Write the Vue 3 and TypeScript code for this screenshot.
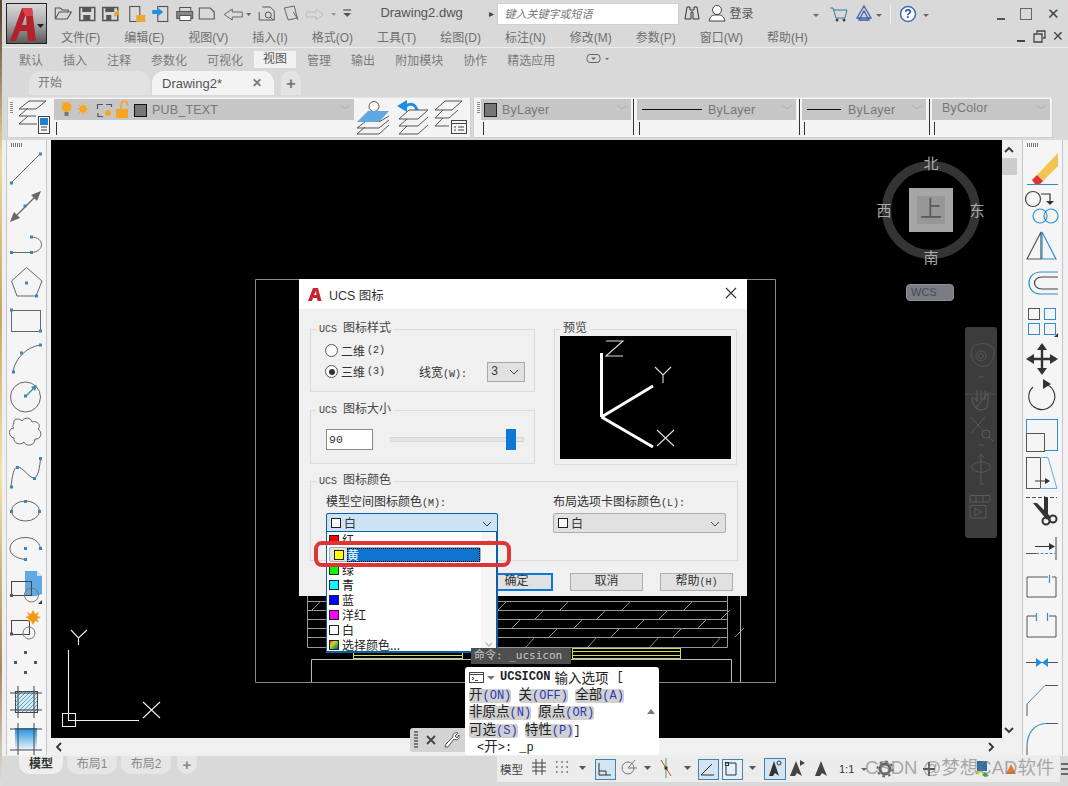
<script setup lang="ts">
const B = '#3d86b8'
const G = '#666'
const D = '#333'
const sq = (x: number, y: number, c = B, s = 3) => `<rect x="${x - s / 2}" y="${y - s / 2}" width="${s}" height="${s}" fill="${c}"/>`
const ln = (d: string, c = G, w = 1, extra = '') => `<path d="${d}" fill="none" stroke="${c}" stroke-width="${w}" ${extra}/>`
const fl = (d: string, c = D) => `<path d="${d}" fill="${c}"/>`
const rc = (x: number, y: number, w: number, h: number, c = G, f = 'none', sw = 1) => `<rect x="${x + 0.5}" y="${y + 0.5}" width="${w}" height="${h}" fill="${f}" stroke="${c}" stroke-width="${sw}"/>`
const ci = (x: number, y: number, r: number, c = G, f = 'none', sw = 1) => `<circle cx="${x}" cy="${y}" r="${r}" fill="${f}" stroke="${c}" stroke-width="${sw}"/>`
const hatch = (x0: number, y0: number, x1: number, y1: number, c: string) => {
  let d = ''
  for (let i = 4; i < x1 - x0 + y1 - y0; i += 4) {
    const ax = Math.min(x0 + i, x1), ay = y0 + Math.max(0, x0 + i - x1)
    const bx = x0 + Math.max(0, y0 + i - y1), by = Math.min(y0 + i, y1)
    d += `M${ax} ${ay}L${bx} ${by}`
  }
  return ln(d, c, 0.8)
}

const leftTools: { top: number; h: number; art: string }[] = [
  { top: 150, h: 36, art: ln('M11 183L40 154') + sq(11.5, 183) + sq(40.5, 154) },
  { top: 186, h: 40, art: ln('M14 218L38 194', G, 1.2) + fl('M10 222L20 218L14 212Z', '#666') + fl('M41 191L31 195L37 201Z', '#666') + sq(25, 206) },
  { top: 226, h: 38, art: ln('M11 252.5H31M31 237C45 237 45 252 31 252.5') + sq(11.5, 252.5) + sq(31.5, 252.5) + sq(31.5, 237) },
  { top: 264, h: 39, art: ln('M26.5 267.5L42 281L36 296H17L11.5 281Z') + sq(26.5, 283) + sq(36.5, 296) },
  { top: 303, h: 38, art: rc(11, 310, 29, 21) + sq(11.5, 310) + sq(40.5, 331) },
  { top: 341, h: 38, art: ln('M13 372C15 358 27 347 40 345') + sq(13.5, 372) + sq(21.5, 353) + sq(40.5, 345) },
  { top: 379, h: 36, art: ci(25.5, 397, 15) + ln('M26 396L35 387', B, 1.2) + fl('M37 385L31 387L35 391Z', B) + sq(25.5, 396) },
  { top: 415, h: 37, art: ln('M14 424C12 418 20 418 22 421C24 417 31 417 32 422C37 420 42 426 38 429C43 432 41 440 35 439C35 446 26 447 24 442C20 446 13 443 14 438C8 437 8 428 14 428C12 427 13 425 14 424Z') },
  { top: 452, h: 40, art: ln('M11 487C12 476 14 467 17.5 467C23 467 29 478 34 478C38 478 40 466 40.5 458') + sq(11.5, 487) + sq(17.5, 467.5) + sq(34.5, 478.5) + sq(40.5, 458.5) },
  { top: 492, h: 38, art: `<ellipse cx="25.5" cy="511" rx="14" ry="10" fill="none" stroke="${G}"/>` + sq(25.5, 501.5) + sq(11.5, 511.5) + sq(39.5, 511.5) },
  { top: 530, h: 38, art: ln('M25 559.5C15 558 10 554 10 548.5C10 542 17 537.5 25 537.5C33 537.5 39 541 40.5 548') + sq(25.5, 548.5) + sq(40.5, 548.5) + sq(25.5, 559.5) },
  { top: 568, h: 38, art: fl('M25 571H37L42 576V594L36 596H25Z', '#62a9e4') + fl('M37 571L42 576H37Z', '#cfe3f3') + rc(11, 581, 20, 14, '#444') + ci(31.5, 595, 7, '#777') + sq(11.5, 595.5, '#555') + fl('M38 604H42V600Z', '#333') },
  { top: 606, h: 37, art: rc(11, 620, 18, 14, '#444') + ci(29, 633, 6, '#777') + sq(11.5, 634, '#555') + fl('M33 610L35 614L39 612L37 616L41 617L37 619L39 622L35 621L33 625L31 621L27 622L29 619L25 617L29 616L27 612L31 614Z', '#f49a10') },
  { top: 643, h: 38, art: sq(25.5, 652.5, '#555') + sq(15.5, 662.5, '#555') + sq(35.5, 662.5, '#555') + sq(25.5, 672.5, '#555') },
  { top: 681, h: 41, art: rc(15, 691, 22, 21, '#444', '#dceaf4') + hatch(15, 691, 37, 712, '#2f8fd0') + ln('M18 686V718M34 686V718M10 693H42M10 710H42', '#444') },
  { top: 722, h: 33, art: `<defs><linearGradient id="gr1" x1="0" y1="0" x2="0" y2="1"><stop offset="0" stop-color="#1e90e0"/><stop offset="1" stop-color="#fff"/></linearGradient></defs><rect x="15" y="728" width="22" height="24" fill="url(#gr1)"/>` + ln('M18 723V755M34 723V755M10 729H42M10 750H42', '#444') }
]

const rightTools: { top: number; h: number; art: string }[] = [
  { top: 150, h: 37, art: fl('M1058 153V166L1043 181L1037 175Z', '#f2c452') + fl('M1037 175L1043 181L1040 184H1035L1032 180Z', '#e53030') + ln('M1027 184.5H1058', B) },
  { top: 187, h: 38, art: ci(1033, 199, 7.5, '#444', 'none', 1.2) + ln('M1041 194H1050V202', '#333', 1.2) + fl('M1046 201H1054L1050 205Z') + ci(1040, 216, 7, '#2f8fd0', 'none', 1.2) + ci(1051, 216, 7, '#2f8fd0', 'none', 1.2) },
  { top: 225, h: 37, art: ln('M1027 259L1041 232V259Z', '#555', 1.2) + ln('M1042 232L1056 259H1042Z', '#2f8fd0', 1.2) },
  { top: 262, h: 38, art: ln('M1058 272H1041C1025 272 1025 294 1041 294H1058', '#2f8fd0', 1.2) + ln('M1058 277H1042C1032 277 1032 289 1042 289H1058', '#444', 1.2) },
  { top: 300, h: 38, art: rc(1028, 308, 11, 11, '#555') + rc(1044, 308, 11, 11, '#2f8fd0') + rc(1028, 323, 11, 11, '#2f8fd0') + rc(1044, 323, 11, 11, '#2f8fd0') + fl('M1054 337H1058V333Z') },
  { top: 338, h: 40, art: ln('M1042 345V373M1028 359H1056', D, 2.4) + fl('M1042 343L1037 350H1047Z') + fl('M1042 375L1037 368H1047Z') + fl('M1026 359L1034 354V364Z') + fl('M1058 359L1050 354V364Z') },
  { top: 378, h: 37, art: ln('M1045 384A13 13 0 1 1 1033 387', D, 1.1) + fl('M1051 384L1043 379V389Z') },
  { top: 415, h: 40, art: rc(1026, 419, 31, 31, '#2f8fd0') + fl('M1026 433H1045V452H1026Z', '#f5f5f5') + rc(1026, 433, 18, 18, '#555') },
  { top: 455, h: 38, art: rc(1026, 457, 14, 31, '#555') + ln('M1040 457.5H1048L1057 488.5H1040', '#5faee4') + ln('M1035 481H1048', D) + fl('M1050 481L1045 478V484Z') },
  { top: 493, h: 36, art: ln('M1026 497.5H1057', '#555', 1, 'stroke-dasharray="4 2"') + fl('M1044 496L1048 498L1048 514L1044 516Z') + fl('M1033 503L1037 503L1050 516L1047 520Z') + ci(1046, 521, 3.5, D, 'none', 2) + ci(1053, 519, 3.5, D, 'none', 2) },
  { top: 529, h: 40, art: ln('M1056 537V560', '#444') + ln('M1035 546.5H1050', D) + fl('M1055 546.5L1049 543V550Z') + ln('M1026 553.5H1036', '#555') + ln('M1036 553.5H1055', '#2f8fd0', 1, 'stroke-dasharray="3 1.5"') },
  { top: 569, h: 38, art: ln('M1048 577H1027V597H1056V577H1052', '#555', 1) + ln('M1049.5 575V583', '#2f8fd0', 1.2) },
  { top: 607, h: 38, art: ln('M1036 616H1027V637H1056V616H1049', '#555', 1) + ln('M1036.5 613V621M1047.5 613V621', '#2f8fd0', 1.2) },
  { top: 645, h: 38, art: ln('M1026 662.5H1058', '#555') + fl('M1036 658V667L1042 662.5Z', '#1f8fe6') + fl('M1048 658V667L1042 662.5Z', '#1f8fe6') },
  { top: 683, h: 38, art: ln('M1045 685.5H1058M1027 704V716', '#555') + ln('M1045 685.5L1027 704', '#3f8fc8') },
  { top: 721, h: 34, art: ln('M1046 723.5H1058M1027 746V755', '#555') + ln('M1046 723.5C1035 723.5 1027 733 1027 746', '#3f8fc8', 1.2) }
]

const qa: { x: number; w: number; art: string }[] = [
  { x: 52, w: 24, art: ln('M55 19V8H60L62 10H68V12M55 19H67L71 12H59L55 19', '#555', 1.1) },
  { x: 76, w: 23, art: rc(78, 7, 15, 13, '#555', 'none', 1.5) + fl('M81 7H90V12H81Z', '#555') + fl('M82 15H89V20H82Z', '#555') },
  { x: 99, w: 25, art: rc(101, 7, 15, 13, '#555', 'none', 1.5) + fl('M104 7H113V12H104Z', '#555') + fl('M105 15H110V20H105Z', '#555') + fl('M113 13L118 9L117 15L113 17Z', '#e8a52c') },
  { x: 124, w: 24, art: rc(127, 6, 10, 15, '#555', 'none', 1.1) + fl('M134 15H143V22H134Z', '#eaa92e') },
  { x: 148, w: 23, art: rc(155, 6, 10, 15, '#555', 'none', 1.1) + fl('M150 10H156V8L161 12L156 16V14H150Z', '#1f8fe6') },
  { x: 171, w: 23, art: rc(176, 7, 11, 5, '#555') + rc(173, 11, 16, 7, '#555', '#888') + rc(176, 15, 11, 5, '#555', '#fff') },
  { x: 194, w: 23, art: ln('M196 8H207L211 12V19H196Z', '#555', 1.1) },
  { x: 217, w: 24, art: ln('M228 9V12H238V17H228V20L220 14.5Z', '#666', 1) },
  { x: 241, w: 12, art: fl('M242 13H247L244.5 16Z', '#666') },
  { x: 253, w: 23, art: ln('M258 7H266L270 11V20H255V12', '#555') + ci(264, 15, 3, '#555') + ln('M266 17L269 20', '#555') },
  { x: 276, w: 23, art: ln('M279 8L289 6L292 18L283 20Z', '#666') + ln('M288 12L293 20', '#666') },
  { x: 299, w: 22, art: ln('M311 9V12H301V17H311V20L318 14.5Z', '#bbb', 1) },
  { x: 321, w: 12, art: fl('M325 13H330L327.5 16Z', '#999') },
  { x: 333, w: 16, art: ln('M337 10H345', '#555', 1.2) + fl('M337 13H345L341 17Z', '#555') }
]

const st: { x: number; w: number; m: number; art: string }[] = [
  { x: 524, w: 22, m: 5, art: ln('M527 763H541M527 767H541M527 771H541M531 759V775M537 759V775', '#444') },
  { x: 546, w: 20, m: 1, art: ln('M550 762H562M550 767H562M550 772H562', '#666', 1.6, 'stroke-dasharray="1.6 3.6"') },
  { x: 566, w: 14, m: 3, art: fl('M570 766H577L573.5 770Z', '#555') },
  { x: 580, w: 27, m: 2, art: rc(584, 759, 20, 20, '#3f84b5', '#d3e5f3') + ln('M588 763V775H600M588 771H595V775', '#333') },
  { x: 607, w: 20, m: 1, art: ci(616, 768, 6, '#777') + ln('M616 768H625M616 768L623 760', '#777') },
  { x: 627, w: 13, m: 2, art: fl('M630 766H637L633.5 770Z', '#555') },
  { x: 640, w: 20, m: 2, art: ln('M645 760L655 776', '#d83a3a') + ln('M650 758V778', '#4a4') + sq(650, 768, '#333') },
  { x: 660, w: 14, m: 4, art: fl('M664 766H671L667.5 770Z', '#555') },
  { x: 674, w: 25, m: 0, art: rc(678, 759, 20, 20, '#3f84b5', '#d3e5f3') + ln('M681 775H694M681 775L692 764', '#333') },
  { x: 699, w: 23, m: 2, art: rc(700, 759, 20, 20, '#3f84b5', '#e6f0f8') + ln('M704 763H714V775H704V766', '#333') + rc(703, 762, 3, 3, '#333') },
  { x: 722, w: 12, m: 3, art: fl('M724 766H731L727.5 770Z', '#555') },
  { x: 734, w: 26, m: 2, art: rc(737, 758, 21, 21, '#3f84b5', '#d3e5f3') + fl('M747 761L752 776L748 773L746 776L742 776Z', '#333') + ci(752, 763, 2, '#333') },
  { x: 760, w: 24, m: -3, art: fl('M772 761L778 776L773 773L771 776L766 776Z', '#444') + fl('M776 760L781 763L776 766Z', '#444') },
  { x: 784, w: 20, m: 3, art: fl('M794 761L800 776L795 773L793 776L788 776Z', '#444') }
]

const menus = ['文件(F)', '编辑(E)', '视图(V)', '插入(I)', '格式(O)', '工具(T)', '绘图(D)', '标注(N)', '修改(M)', '参数(P)', '窗口(W)', '帮助(H)']
const ribbon = ['默认', '插入', '注释', '参数化', '可视化', '视图', '管理', '输出', '附加模块', '协作', '精选应用']
const colors = [
  { n: '红', c: '#ff0000' }, { n: '黄', c: '#ffff00', sel: true }, { n: '绿', c: '#00ff00' }, { n: '青', c: '#00ffff' },
  { n: '蓝', c: '#0000ff' }, { n: '洋红', c: '#ff00ff' }, { n: '白', c: '#ffffff' }
]
let hatchLines = ''
const rows = [601, 610, 619, 628, 637, 647]
for (let r = 0; r < 5; r++) {
  for (let i = 0; i < 7; i++) {
    const x = 312 + i * 62 + ((r * 37) % 60)
    hatchLines += `M${x} ${rows[r + 1]}L${x + 9} ${rows[r]}`
  }
}
</script>

<template>
  <div class="root">
    <div class="desk"></div>
    <div class="app">
      <header class="head">
        <div class="logo">
          <svg width="38" height="38" viewBox="0 0 38 38">
            <path d="M2 36L14 3H24L28 36H20L19 26H12L8 36ZM14 20H18.5L18 9Z" fill="#b3212c" />
            <path d="M14 3H24L25 11H17Z" fill="#d8434a" />
            <path d="M29 19H36L32.5 23Z" fill="#222" />
          </svg>
        </div>
        <div class="head-main">
          <div class="qa-row">
            <svg v-for="t in qa" :key="t.x" :width="t.w * 1.022" height="22" :viewBox="`${t.x} 3 ${t.w} 22`" v-html="t.art"></svg>
            <span class="title">Drawing2.dwg</span>
            <span class="tri">▸</span>
            <div class="search">键入关键字或短语</div>
            <svg width="16" height="22" viewBox="683 3 16 22"><path d="M686 7H689V10H693V7H696L698 19H692V12H690V19H684Z" fill="none" stroke="#333" /></svg>
            <svg class="user" width="18" height="22" viewBox="705 3 18 22"><circle cx="714" cy="10" r="4.5" fill="#fff" stroke="#444" /><path d="M706 21C707 16 710 15 712 15H716C718 15 721 16 722 21Z" fill="#fff" stroke="#444" /></svg>
            <span class="login">登录</span>
            <span class="dd dd-login"></span>
            <svg class="cart" width="18" height="22" viewBox="825 3 18 22"><path d="M825 8H828L831 18H840L842 10H829" fill="none" stroke="#2d7f9c" /><circle cx="832" cy="20" r="1.5" fill="#444" /><circle cx="839" cy="20" r="1.5" fill="#444" /></svg>
            <svg class="a360" width="18" height="22" viewBox="848 3 18 22"><path d="M857 6L864 18H850ZM857 11L852 20H862Z" fill="none" stroke="#3a5fa8" stroke-width="1.3" /></svg>
            <span class="dd dd-a"></span>
            <i class="vsep"></i>
            <svg width="17" height="22" viewBox="893 3 17 22"><circle cx="901" cy="14" r="7.5" fill="#fff" stroke="#3b6fb5" stroke-width="1.5" /><text x="901" y="18" font-size="12" font-weight="700" text-anchor="middle" fill="#1f4fa0" font-family="Liberation Sans, sans-serif">?</text></svg>
            <span class="dd dd-h"></span>
            <div class="win">
              <span class="w-min"></span>
              <span class="w-max"></span>
              <span class="w-x">✕</span>
            </div>
          </div>
          <nav class="menu-row">
            <span v-for="m in menus" :key="m">{{ m }}</span>
            <div class="doc-ctl">
              <i class="c-min"></i>
              <svg width="13" height="13" viewBox="0 0 13 13"><path d="M4 3V1H12V8H10M1 4H9V12H1Z" fill="none" stroke="#444" stroke-width="1.3" /></svg>
              <b>✕</b>
            </div>
          </nav>
        </div>
      </header>

      <div class="ribbon">
        <span v-for="r in ribbon" :key="r" :class="{ on: r === '视图' }">{{ r }}</span>
        <svg class="r-ico" width="24" height="12" viewBox="0 0 24 12"><rect x="1" y="1.5" width="13" height="8" rx="3" fill="none" stroke="#666" /><path d="M5 4.5H10L7.5 7Z M19 5H23L21 7Z" fill="#666" /></svg>
      </div>

      <div class="docs">
        <div class="doc doc-a">开始</div>
        <div class="doc doc-b"><span>Drawing2*</span><b>✕</b></div>
        <div class="doc doc-p">+</div>
      </div>

      <div class="bars">
        <div class="panel p1">
          <i class="grip"></i>
          <svg class="state" width="34" height="36" viewBox="15 99 34 36">
            <path d="M18 109L28 101H45L35 109ZM18 116L27 108M18 116H35M18 124L27 116M18 124H36" fill="none" stroke="#555" />
            <rect x="37.500" y="116.500" width="11" height="17" fill="#f4f4f4" stroke="#444" /><rect x="39" y="118" width="8" height="7" fill="#1f7fd0" />
            <path d="M40 127H46M40 130H46" stroke="#444" />
          </svg>
          <div class="seg seg-l">
            <div class="combo cb-layer">
              <svg width="93" height="21" viewBox="55 98 93 21">
                <circle cx="66.500" cy="106" r="5" fill="#f5a623" /><rect x="64.500" y="111" width="4" height="4" fill="#777" />
                <circle cx="83" cy="108" r="3.500" fill="#f5a623" /><path d="M83 102V114M77 108H89M79 104L87 112M87 104L79 112" stroke="#f5a623" />
                <path d="M97.500 108V103.500H103M106 103.500H111.500V106M98 112V115.500H103" fill="none" stroke="#555" stroke-width="1.2" /><circle cx="108" cy="112" r="3" fill="#f5a623" />
                <rect x="116" y="108" width="12" height="9" fill="#f5a623" /><path d="M121 108V103.500A3 3 0 0 1 127.500 103.500V105" fill="none" stroke="#f5a623" stroke-width="1.5" />
                <rect x="134.500" y="103.500" width="12" height="12" fill="#777" stroke="#111" />
              </svg>
              <span class="cb-text pub">PUB_TEXT</span><span class="chev">﹀</span>
            </div>
            <i class="tick"></i>
          </div>
          <svg class="layer-tools" width="114" height="36" viewBox="355 99 114 36">
            <circle cx="374" cy="106.500" r="5" fill="#fff" stroke="#555" />
            <path d="M357 122L368 111H389L379 122Z" fill="#5fa8e0" />
            <path d="M357 128L365 122M379 122L389 116M357 128H379L389 120M357 134L365 127M357 134H379L389 125" fill="none" stroke="#555" />
            <path d="M405 107C410 102 415 104 417 110" fill="none" stroke="#1f8fe6" stroke-width="3" /><path d="M397 106L407 100V112Z" fill="#1f8fe6" />
            <path d="M399 119L409 110H428L418 119ZM399 126L407 119M399 126H418L428 117M399 134L407 126M399 134H418L428 125" fill="none" stroke="#555" />
            <path d="M435 110L445 101H462L452 110ZM435 118L443 110M435 118H449L458 110M435 126L443 118M435 126H449" fill="none" stroke="#555" />
            <rect x="451.500" y="120.500" width="15" height="13" fill="#f4f4f4" stroke="#444" /><path d="M451 123.500H467M454 127H456M458 127H464M454 130H456M458 130H464" stroke="#444" />
          </svg>
        </div>
        <div class="panel p2">
          <i class="grip g2"></i>
          <div class="seg"><div class="combo w150"><span class="sw-b"></span><span class="cb-text">ByLayer</span><span class="chev">﹀</span></div><i class="tick"></i></div>
          <i class="sep s-a"></i>
          <div class="seg"><div class="combo w159"><i class="lt l60"></i><span class="cb-text">ByLayer</span><span class="chev">﹀</span></div><i class="tick"></i></div>
          <i class="sep s-b"></i>
          <div class="seg"><div class="combo w124"><i class="lt l34"></i><span class="cb-text">ByLayer</span><span class="chev">﹀</span></div><i class="tick"></i></div>
          <i class="sep s-b"></i>
          <div class="seg"><div class="combo w118"><span class="cb-text up">ByColor</span><span class="chev">﹀</span></div><i class="tick"></i></div>
        </div>
      </div>

      <main class="work">
        <aside class="strip strip-l">
          <i class="grip g3"></i>
          <svg v-for="t in leftTools" :key="t.top" width="41" :height="t.h" :viewBox="`6 ${t.top} 41 ${t.h}`" v-html="t.art"></svg>
        </aside>

        <div class="center">
          <div class="canvas-row">
            <section class="canvas">
              <svg class="drawing" width="951" height="598" viewBox="51 140 951 598">
                <path d="M255.500 279.500H775.500V682.500H255.500Z" fill="none" stroke="#8a8a8a" />
                <path d="M307.500 596V647.500H727.500V596M307 601.500H727M307 610.500H727M307 619.500H727M307 628.500H727M307 637.500H727" fill="none" stroke="#999" />
                <path :d="hatchLines" fill="none" stroke="#888" />
                <path d="M353.500 655.500H462M353 658.500H462M353.500 648V659M462.500 648V659M572 648.500H680M572 651.500H680M572 655.500H680M572 658.500H680M572.500 648V659M680.500 648V659" fill="none" stroke="#d6d65a" />
                <path d="M311.500 682V659.500H731.500V682M740.500 596V682" fill="none" stroke="#bbb" />
                <path d="M68.500 650V720.500H139M62.500 713.500H75.500V726.500H62.500ZM71 630L78.500 638L87 630M78.500 638V645M143 702L160 718M160 702L143 718" fill="none" stroke="#eee" stroke-width="1.100" />
              </svg>

              <div class="cube">
                <div class="ring"></div>
                <div class="face"><span>上</span></div>
                <span class="dir n">北</span><span class="dir s">南</span><span class="dir w">西</span><span class="dir e">东</span>
              </div>
              <div class="wcs">WCS</div>

              <div class="navbar">
                <svg width="32" height="211" viewBox="965 327 32 211">
                  <path d="M965 394H997" stroke="#4d4d4d" />
                  <path d="M974 346C980 342 990 343 994 349C995 356 992 364 986 366C978 368 972 362 971 354C971 351 972 348 974 346Z" fill="none" stroke="#555" />
                  <circle cx="981" cy="356" r="5" fill="none" stroke="#555" /><circle cx="981" cy="356" r="2.5" fill="none" stroke="#555" />
                  <path d="M979 377H984M976 408C974 404 971 402 972 398C975 398 977 400 977 402L977 393M977 393V390M981 390V400M985 391V400M988 393V403C988 408 986 410 981 410C979 410 977 409 976 408Z" fill="none" stroke="#5a5a5a" stroke-width="1.1" />
                  <path d="M971 417L985 433M985 417L971 433" stroke="#5a5a5a" /><circle cx="986" cy="434" r="4" fill="none" stroke="#5a5a5a" /><path d="M989 437L993 441" stroke="#5a5a5a" />
                  <path d="M979 445H984" stroke="#5a5a5a" />
                  <path d="M981 455V482M971 467C975 460 987 460 991 467C987 474 975 474 971 467ZM978 458L981 454L984 458" fill="none" stroke="#5a5a5a" />
                  <path d="M979 484H984" stroke="#5a5a5a" />
                  <path d="M970 495.500H990V502H970ZM976 495V502M983 495V502M970 505.500H986V518H970ZM975 508L981 512L975 516Z" fill="none" stroke="#5a5a5a" />
                </svg>
              </div>

              <div class="dialog">
                <div class="d-title">
                  <svg width="15" height="15" viewBox="0 0 15 15"><path d="M0 14L5 1H10L13.500 14H9.500L9 11H5L4 14ZM6 8H8.500L8 4Z" fill="#c4262e" /></svg>
                  <span>UCS 图标</span>
                  <svg class="d-x" width="12" height="12" viewBox="0 0 12 12"><path d="M1 1L11 11M11 1L1 11" stroke="#333" stroke-width="1.100" /></svg>
                </div>
                <div class="d-body">
                  <div class="d-top">
                    <div class="d-left">
                      <fieldset class="g g-style">
                        <legend><span class="lat">UCS </span>图标样式</legend>
                        <div class="g-in">
                          <label class="radio"><i class="rd"></i>二维<span class="lat">(2)</span></label>
                          <div class="radio-row">
                            <label class="radio"><i class="rd on"></i>三维<span class="lat">(3)</span></label>
                            <span class="lw">线宽<span class="lat">(W):</span></span>
                            <div class="mini">3<svg width="10" height="6" viewBox="0 0 10 6"><path d="M1 1L5 5L9 1" fill="none" stroke="#444" /></svg></div>
                          </div>
                        </div>
                      </fieldset>
                      <fieldset class="g g-size">
                        <legend><span class="lat">UCS </span>图标大小</legend>
                        <div class="size-row">
                          <div class="num">90</div>
                          <div class="slider"><i></i></div>
                        </div>
                      </fieldset>
                    </div>
                    <fieldset class="g g-prev">
                      <legend>预览</legend>
                      <svg class="prev" width="171" height="123" viewBox="560 336 171 123">
                        <path d="M601.500 417V353M601.500 417L653 386M601.500 417L653 447" fill="none" stroke="#fff" stroke-width="3" />
                        <path d="M606 341H623L606 356H623M655 367L663 375L671 367M663 375V383M657 430L674 446M674 430L657 446" fill="none" stroke="#ddd" stroke-width="1.100" />
                      </svg>
                    </fieldset>
                  </div>
                  <fieldset class="g g-color">
                    <legend><span class="lat">UCS </span>图标颜色</legend>
                    <div class="col-row">
                      <div class="col-a">
                        <span class="c-label">模型空间图标颜色<span class="lat">(M):</span></span>
                        <div class="sel sel-on"><i class="chip white"></i>白<svg width="10" height="6" viewBox="0 0 10 6"><path d="M1 1L5 5L9 1" fill="none" stroke="#333" /></svg></div>
                      </div>
                      <div class="col-b">
                        <span class="c-label">布局选项卡图标颜色<span class="lat">(L):</span></span>
                        <div class="sel"><i class="chip white"></i>白<svg width="10" height="6" viewBox="0 0 10 6"><path d="M1 1L5 5L9 1" fill="none" stroke="#444" /></svg></div>
                      </div>
                    </div>
                  </fieldset>
                  <div class="btns">
                    <button class="def">确定</button>
                    <button>取消</button>
                    <button>帮助<span class="lat">(H)</span></button>
                  </div>
                </div>

                <div class="drop">
                  <div v-for="c in colors" :key="c.n" class="opt" :class="{ sel: c.sel }">
                    <i class="chip" :style="{ background: c.c }"></i><span class="opt-t">{{ c.n }}</span>
                  </div>
                  <div class="opt">
                    <i class="chip rainbow"></i><span class="opt-t">选择颜色...</span>
                  </div>
                  <div class="d-scroll">
                    <svg width="8" height="5" viewBox="0 0 8 5"><path d="M1 4L4 1L7 4" fill="none" stroke="#bbb" stroke-width="1.500" /></svg>
                    <svg width="8" height="5" viewBox="0 0 8 5"><path d="M1 1L4 4L7 1" fill="none" stroke="#bbb" stroke-width="1.500" /></svg>
                  </div>
                </div>
                <div class="mark"></div>
              </div>

              <div class="echo">命令: _ucsicon</div>
            </section>
            <div class="vscroll">
              <svg width="12" height="8" viewBox="0 0 12 8"><path d="M2 6L6 2L10 6" fill="none" stroke="#333" stroke-width="1.800" /></svg>
              <i class="thumb"></i>
              <svg class="down" width="12" height="8" viewBox="0 0 12 8"><path d="M2 2L6 6L10 2" fill="none" stroke="#333" stroke-width="1.800" /></svg>
            </div>
          </div>
          <div class="hscroll">
            <svg width="8" height="12" viewBox="0 0 8 12"><path d="M6 2L2 6L6 10" fill="none" stroke="#333" stroke-width="1.800" /></svg>
            <svg width="8" height="12" viewBox="0 0 8 12"><path d="M2 2L6 6L2 10" fill="none" stroke="#333" stroke-width="1.800" /></svg>
          </div>
        </div>

        <aside class="strip strip-r">
          <i class="grip g3"></i>
          <svg v-for="t in rightTools" :key="t.top" width="41" :height="t.h" :viewBox="`1022 ${t.top} 41 ${t.h}`" v-html="t.art"></svg>
        </aside>

        <div class="cmd-tools">
          <i class="cmd-grip"></i>
          <svg width="12" height="12" viewBox="0 0 12 12"><path d="M2 2L10 10M10 2L2 10" stroke="#444" stroke-width="1.800" /></svg>
          <svg width="16" height="16" viewBox="0 0 16 16"><path d="M1 15L2 12L9 5C8 2 11 0 14 1L11 4L13 6L15 3C16 7 13 9 10 7L4 15Z" fill="#fff" stroke="#555" /></svg>
        </div>
        <div class="cmd">
          <div class="cmd-l cmd-l1">
            <svg width="20" height="12" viewBox="0 0 20 12"><rect x=".5" y=".5" width="14" height="10" fill="#fff" stroke="#444" /><path d="M.5 2.500H14" stroke="#444" /><path d="M3 5L5 6.500L3 8M6 8.500H9" fill="none" stroke="#444" /></svg>
            <i class="cmd-dd"></i>
            <b>UCSICON</b><span class="z head-z">输入选项</span><span class="br">[</span>
          </div>
          <div class="cmd-l"><span class="k"><span class="z">开</span><em>(ON)</em></span> <span class="k"><span class="z">关</span><em>(OFF)</em></span> <span class="k"><span class="z">全部</span><em>(A)</em></span></div>
          <div class="cmd-l"><span class="k"><span class="z">非原点</span><em>(N)</em></span> <span class="k"><span class="z">原点</span><em>(OR)</em></span></div>
          <div class="cmd-l"><span class="k"><span class="z">可选</span><em>(S)</em></span> <span class="k"><span class="z">特性</span><em>(P)</em></span>]</div>
          <div class="cmd-l cmd-in">&lt;<span class="z">开</span>&gt;: _p</div>
          <i class="cmd-up"></i>
        </div>
      </main>

      <footer class="foot">
        <div class="tabs">
          <span class="ltab on">模型</span>
          <span class="ltab">布局1</span>
          <span class="ltab">布局2</span>
          <span class="ltab plus">+</span>
        </div>
        <div class="status">
          <span class="s-model">模型</span>
          <svg v-for="t in st" :key="t.x" :width="t.w" height="26" :viewBox="`${t.x} 756 ${t.w} 26`" :style="{ marginLeft: t.m + 'px' }" v-html="t.art"></svg>
          <span class="scale">1:1</span><i class="dd s-dd"></i>
          <svg class="gear" width="18" height="18" viewBox="0 0 18 18"><circle cx="9" cy="9" r="5" fill="none" stroke="#666" stroke-width="3" /><circle cx="9" cy="9" r="7.500" fill="none" stroke="#666" stroke-width="2" stroke-dasharray="2.500 3.400" /></svg>
          <svg class="s-plus" width="14" height="16" viewBox="0 0 14 16"><path d="M7 1V15M1 8H13" stroke="#555" stroke-width="1.800" /></svg>
          <svg class="s-ok" width="16" height="18" viewBox="0 0 16 18"><path d="M3 1H13V11H3Z" fill="#2d6fa8" /><path d="M1 11H7L4 15Z" fill="#e3c21e" /><path d="M8 15L11 12L15 16L11 17Z" fill="#3cae3c" /></svg>
          <svg class="s-or" width="12" height="12" viewBox="0 0 12 12"><path d="M6 1L11 11H1Z" fill="#e8782a" /></svg>
          <svg class="s-burger" width="15" height="14" viewBox="0 0 15 14"><path d="M1 2H14M1 7H14M1 12H14" stroke="#444" stroke-width="1.500" /></svg>
        </div>
        <span class="wm">CSDN @梦想CAD软件</span>
      </footer>
    </div>
  </div>
</template>

<style>
html, body { margin: 0; background: #d9d9d9; }
</style>

<style scoped>
* { box-sizing: border-box; }
.root { width: 1068px; height: 786px; display: flex; overflow: hidden; font-family: "Liberation Sans", "Noto Sans CJK SC", sans-serif; font-size: 12px; color: #555; background: #d9d9d9; }
.desk { width: 2px; flex: none; background: linear-gradient(#5c4a35 0 2%, #e9d9a0 20%, #c9a56a 40%, #efe4a8 60%, #a98a60 85%, #ddd 100%); }
.app { width: 1066px; display: flex; flex-direction: column; }
svg { display: block; flex: none; }
i { display: block; flex: none; font-style: normal; }

.head { height: 48px; display: flex; align-items: flex-start; border-bottom: 1px solid #eee; flex: none; }
.logo { width: 41px; height: 41px; margin: 3px 0 0 4px; border: 1px solid #222; background: linear-gradient(#d8d8d8, #b0b0b0 45%, #5a5a5a); padding: 1px; flex: none; }
.head-main { flex: 1; padding-left: 5px; }
.qa-row { height: 25px; padding-top: 3px; display: flex; align-items: flex-start; position: relative; }
.title { margin-left: 25px; width: 109px; font-size: 13px; line-height: 20px; color: #555; flex: none; }
.tri { width: 8px; font-size: 10px; line-height: 22px; color: #444; flex: none; }
.search { width: 182px; height: 22px; background: #fff; border: 1px solid #cfcfcf; margin-right: 5px; padding-left: 6px; line-height: 20px; font-size: 11px; font-style: italic; color: #777; flex: none; }
.user { margin-left: 8px; }
.login { margin-left: 3px; line-height: 22px; color: #555; width: 84px; flex: none; }
.dd { width: 0; height: 0; border: 3px solid transparent; border-top: 3px solid #666; border-bottom: 0; flex: none; }
.dd-login { margin-top: 11px; width: 6px; }
.cart { margin-left: 11px; }
.a360 { margin-left: 7px; }
.dd-a { margin: 11px 0 0 3px; width: 6px; }
.vsep { width: 1px; height: 20px; background: #eee; margin: 1px 9px 0 8px; }
.dd-h { margin: 11px 0 0 6px; width: 6px; }
.win { position: absolute; right: 9px; top: 4px; display: flex; align-items: center; gap: 15px; height: 20px; }
.w-min { width: 8px; height: 2px; background: #555; margin-top: 10px; }
.w-max { width: 12px; height: 12px; border: 1px solid #666; }
.w-x { font-size: 15px; color: #444; width: 12px; }
.menu-row { height: 21px; display: flex; align-items: center; gap: 24px; padding-left: 9px; color: #6f6f6f; position: relative; white-space: nowrap; margin-top: 1px; }
.doc-ctl { position: absolute; right: 4px; top: 2px; display: flex; align-items: center; gap: 6px; }
.c-min { width: 8px; height: 2px; background: #444; margin-top: 9px; margin-right: 2px; }
.doc-ctl b { font-weight: 400; font-size: 14px; color: #444; }

.ribbon { height: 22px; flex: none; display: flex; align-items: center; gap: 20px; padding-left: 17px; color: #7a7a7a; position: relative; white-space: nowrap; }
.ribbon .on { background: #f2f2f2; color: #555; padding: 0 9px; margin: 0 -9px; height: 17px; line-height: 17px; }
.r-ico { margin-left: 11px; }

.docs { height: 24px; margin-top: 1px; flex: none; display: flex; align-items: flex-end; padding-left: 27px; }
.doc { height: 24px; line-height: 25px; border-radius: 12px 12px 0 0; flex: none; color: #666; }
.doc-a { width: 121px; background: #e2e2e2; padding-left: 9px; color: #777; }
.doc-b { width: 122px; background: #f3f3f3; padding: 0 12px 0 10px; display: flex; justify-content: space-between; margin-left: 2px; color: #555; }
.doc-b span { font-size: 13px; }
.doc-b b { color: #777; font-size: 12px; font-weight: 700; }
.doc-p { width: 20px; background: #e4e4e4; margin-left: 7px; text-align: center; font-size: 16px; font-weight: 700; color: #777; }

.bars { height: 41px; margin-top: 2px; flex: none; display: flex; padding-left: 5px; gap: 2px; }
.panel { height: 41px; background: #f4f4f4; border: 1px solid #cfcfcf; border-top-color: #e4e4e4; display: flex; align-items: flex-start; flex: none; position: relative; padding-top: 1px; }
.p1 { width: 464px; }
.p2 { width: 580px; padding-left: 7px; }
.grip { width: 3px; height: 11px; margin: 3px 0 0 2px; background: repeating-linear-gradient(#888 0 1px, transparent 1px 2px); }
.state { margin-left: 3px; }
.g2 { position: absolute; left: 1px; }
.seg { display: flex; flex-direction: column; flex: none; }
.seg-l { margin-left: 4px; }
.combo { height: 21px; background: #c6c6c6; display: flex; align-items: center; color: #777; position: relative; flex: none; }
.cb-layer { width: 300px; padding-left: 1px; }
.pub { margin-left: 4px; }
.w150 { width: 150px; padding-left: 3px; }
.w159 { width: 159px; padding-left: 5px; }
.w124 { width: 124px; padding-left: 5px; }
.w118 { width: 118px; padding-left: 10px; }
.sw-b { display: block; width: 13px; height: 14px; background: #777; border: 1px solid #222; margin-right: 5px; flex: none; }
.cb-text { font-size: 12.500px; letter-spacing: .2px; }
.up { margin-top: -3px; }
.chev { position: absolute; right: 2px; top: 3px; width: 12px; font-size: 10px; color: #aaa; overflow: hidden; }
.lt { height: 1px; background: #111; margin-right: 6px; }
.l60 { width: 60px; }
.l34 { width: 34px; margin-right: 7px; }
.tick { width: 1px; height: 13px; background: #333; margin: 2px 0 0 2px; }
.sep { width: 1px; height: 36px; background: #333; }
.s-a { margin: 0 3px 0 2px; }
.s-b { margin: 0 2px 0 3px; }
.layer-tools { margin: 0 0 0 1px; }

.work { flex: 1; margin-top: 2px; display: flex; position: relative; background: #f0f0f0; min-height: 0; }
.strip { width: 41px; flex: none; background: #f5f5f5; border-left: 1px solid #c2c6d0; border-right: 1px solid #c2c6d0; position: relative; padding-top: 10px; overflow: hidden; }
.strip-l { margin-left: 4px; }
.strip-r { margin-left: 1px; }
.g3 { position: absolute; left: 4px; top: 3px; width: 12px; height: 4px; margin: 0; background: repeating-linear-gradient(90deg, #777 0 1px, transparent 1px 2px); }
.strip svg { margin-left: -1px; }
.center { margin-left: 4px; width: 970px; display: flex; flex-direction: column; flex: none; }
.canvas-row { display: flex; height: 598px; flex: none; }
.canvas { width: 951px; height: 598px; background: #000; position: relative; flex: none; }
.drawing { position: absolute; left: 0; top: 0; }
.vscroll { width: 19px; display: flex; flex-direction: column; align-items: flex-start; padding: 6px 0 0 1px; background: #f0f0f0; flex: none; }
.thumb { width: 15px; height: 17px; background: #cdcdcd; margin: 4px 0 0 -1px; }
.down { margin-top: 551px; }
.hscroll { height: 17px; display: flex; justify-content: space-between; align-items: center; padding: 0 7px 0 4px; width: 951px; }

.cube { position: absolute; left: 829px; top: 19px; width: 102px; height: 102px; }
.ring { position: absolute; left: 2px; top: 2px; width: 98px; height: 98px; border: 9px solid #343434; border-radius: 50%; }
.face { position: absolute; left: 29px; top: 29px; width: 44px; height: 44px; background: #a6a6a6; display: flex; align-items: center; justify-content: center; }
.face span { width: 28px; height: 28px; background: #979797; text-align: center; line-height: 26px; font-size: 22px; color: #5a5a5a; }
.dir { position: absolute; font-size: 15px; line-height: 15px; color: #aaa; width: 16px; text-align: center; }
.n { left: 43px; top: -3px; }
.s { left: 43px; top: 91px; }
.w { left: -4px; top: 44px; }
.e { left: 89px; top: 44px; }
.wcs { position: absolute; left: 855px; top: 144px; width: 48px; height: 17px; background: #7b7b85; border: 1px solid #8f8f96; border-radius: 4px; color: #4a4a52; font-size: 11px; line-height: 15px; padding-left: 4px; }
.navbar { position: absolute; left: 914px; top: 187px; width: 32px; height: 211px; background: #3c3c3c; border-radius: 3px; }

.dialog { position: absolute; left: 248px; top: 139px; width: 448px; height: 317px; background: #f0f0f0; font-family: "Liberation Mono", "Noto Sans CJK SC", monospace; color: #333; }
.lat { font-family: "Liberation Mono", monospace; font-size: 10px; }
.d-title { height: 30px; background: #fff; display: flex; align-items: center; padding-left: 9px; gap: 6px; font-family: "Liberation Sans", "Noto Sans CJK SC", sans-serif; font-size: 12.500px; color: #333; position: relative; }
.d-x { position: absolute; right: 10px; top: 8px; }
.d-body { padding: 13px 10px 0 11px; }
.d-top { display: flex; gap: 19px; }
.d-left { width: 225px; flex: none; }
.g { margin: 0; border: 1px solid #dcdcdc; padding: 0; min-width: 0; }
.g legend { padding: 0 3px; margin-left: 5px; line-height: 14px; font-size: 12px; color: #444; }
.g-style { height: 70px; }
.g-in { padding: 3px 0 0 14px; }
.radio { display: flex; align-items: center; gap: 2px; height: 21px; font-size: 12px; }
.rd { width: 13px; height: 13px; border: 1px solid #555; background: #fff; border-radius: 50%; position: relative; margin-right: 1px; }
.rd.on::after { content: ""; position: absolute; left: 2.500px; top: 2.500px; width: 6px; height: 6px; border-radius: 50%; background: #333; }
.radio-row { display: flex; align-items: center; }
.lw { margin-left: 34px; width: 68px; flex: none; font-size: 12px; }
.mini { width: 38px; height: 20px; border: 1px solid #a8a8a8; background: #e1e1e1; display: flex; justify-content: space-between; align-items: center; padding: 0 5px 0 3px; }
.g-size { height: 61px; margin-top: 11px; }
.size-row { display: flex; align-items: center; padding: 11px 0 0 15px; }
.num { width: 47px; height: 21px; border: 1px solid #8a8a8a; background: #fff; line-height: 19px; padding-left: 2px; font-size: 11.500px; }
.slider { width: 134px; height: 5px; background: #e6e6e6; border: 1px solid #d6d6d6; margin-left: 17px; position: relative; }
.slider i { position: absolute; left: 115px; top: -9px; width: 10px; height: 21px; background: #0a78d7; }
.g-prev { width: 183px; height: 143px; }
.prev { margin-left: 5px; background: #000; }
.g-color { width: 428px; height: 87px; margin-top: 9px; }
.col-row { display: flex; padding: 5px 0 0 15px; gap: 55px; }
.col-a { width: 172px; }
.col-b { width: 173px; }
.c-label { display: block; height: 19px; line-height: 14px; padding-top: 2px; font-size: 12px; white-space: nowrap; }
.sel { height: 20px; border: 1px solid #adadad; background: #e1e1e1; border-radius: 2px; display: flex; align-items: center; padding-left: 4px; gap: 3px; position: relative; font-size: 12px; }
.sel svg { position: absolute; right: 5px; top: 7px; }
.sel-on { background: #cde4f7; border-color: #0a5ea8; }
.chip { width: 10px; height: 10px; border: 1px solid #222; flex: none; }
.white { background: #fff; }
.rainbow { background: linear-gradient(135deg, #e33, #ec3, #3b3, #33d); }
.btns { display: flex; justify-content: flex-end; gap: 17px; margin-top: 12px; padding-right: 4px; }
button { width: 73px; height: 18px; border: 1px solid #adadad; background: #e1e1e1; font: inherit; font-size: 12px; color: #333; padding: 0; line-height: 15px; }
.def { border: 2px solid #0a78d7; }
.drop { position: absolute; left: 27px; top: 252px; width: 172px; height: 122px; background: #fff; border: 1px solid #0b5fa8; border-width: 1px 2px 2px 1px; padding: 0 0 0 2px; font-family: "Noto Sans CJK SC", sans-serif; overflow: hidden; }
.opt { height: 15px; display: flex; align-items: center; gap: 3px; font-size: 12px; line-height: 15px; width: 152px; color: #222; }
.opt-t { white-space: nowrap; flex: 1; height: 14px; line-height: 13px; }
.opt.sel .opt-t { background: #0e74cf; color: #fff; outline: 1px dotted #000; outline-offset: -1px; }
.d-scroll { position: absolute; right: 0; top: 0; bottom: 0; width: 15px; background: #f6f6f6; display: flex; flex-direction: column; justify-content: space-between; align-items: center; padding: 8px 0 4px; }
.mark { position: absolute; left: 15px; top: 262px; width: 197px; height: 26px; border: 4px solid #e03535; border-radius: 8px; }
.echo { position: absolute; left: 420px; top: 508px; width: 100px; height: 16px; background: #4e4e4e; color: #c8c8c8; font-family: "DejaVu Sans Mono", "Noto Sans CJK SC", monospace; font-size: 11px; line-height: 16px; padding-left: 3px; white-space: nowrap; overflow: hidden; }

.cmd-tools { position: absolute; left: 408px; top: 588px; width: 55px; height: 24px; background: #d3d3d3; border-radius: 3px 0 0 3px; display: flex; align-items: center; gap: 7px; padding-left: 4px; }
.cmd-grip { width: 4px; height: 18px; background: repeating-linear-gradient(#777 0 2px, transparent 2px 3px); }
.cmd { position: absolute; left: 463px; top: 527px; width: 194px; height: 88px; background: #fff; border-radius: 3px; padding: 2px 4px 0; font-family: "Liberation Mono", "Noto Sans CJK SC", monospace; font-size: 12px; color: #222; white-space: nowrap; overflow: hidden; }
.cmd-l { height: 17.500px; line-height: 17.500px; }
.z { font-family: "Noto Sans CJK SC", sans-serif; font-size: 13.500px; line-height: 1; }
.cmd-l1 { display: flex; align-items: center; }
.cmd-l1 b { margin-left: 5px; }
.head-z { margin-left: 4px; }
.br { margin-left: 8px; }
.cmd-dd { width: 8px; height: 0; border: 4px solid transparent; border-top: 4px solid #777; border-bottom: 0; margin-left: -2px; }
.k { background: #d0d0d0; border-radius: 3px; }
.k em { font-style: normal; color: #2a3bb5; }
.cmd-in { padding-left: 8px; }
.cmd-up { position: absolute; right: 4px; top: 42px; width: 8px; height: 0; border: 4px solid transparent; border-bottom: 5px solid #777; border-top: 0; }

.foot { height: 31px; flex: none; display: flex; align-items: flex-start; position: relative; background: #d9d9d9; border-top: 1px solid #eee; }
.tabs { display: flex; width: 495px; padding-left: 17px; flex: none; gap: 4px; }
.ltab { width: 50px; height: 18px; background: #e6e6e6; border-radius: 0 0 10px 10px; text-align: center; line-height: 17px; color: #888; flex: none; }
.ltab.on { width: 44px; background: #eeeeee; color: #333; font-weight: 700; }
.ltab.plus { width: 20px; margin-left: 2px; font-size: 15px; font-weight: 700; }
.status { width: 563px; height: 26px; background: #ececec; display: flex; align-items: center; flex: none; }
.s-model { width: 27px; flex: none; padding-left: 3px; color: #444; font-size: 11.500px; white-space: nowrap; }
.scale { margin-left: 8px; font-size: 11px; color: #333; }
.s-dd { margin-left: 7px; width: 6px; }
.gear { margin-left: 9px; }
.s-plus { margin-left: 28px; }
.s-ok { margin-left: 38px; }
.s-or { margin-left: 15px; }
.s-burger { margin-left: 43px; }
.wm { position: absolute; left: 863px; top: 0; font-size: 18.500px; line-height: 24px; color: rgba(120, 120, 120, .62); white-space: nowrap; }
</style>
